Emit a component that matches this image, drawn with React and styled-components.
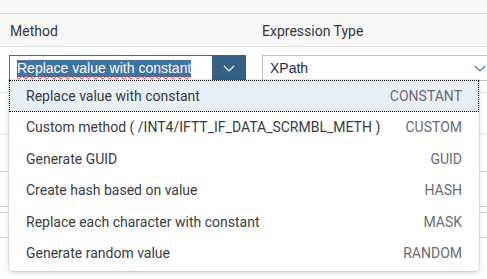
import React from "react";
import styled, { createGlobalStyle } from "styled-components";

const GlobalStyle = createGlobalStyle`
  html, body { margin: 0; padding: 0; background: #ffffff; }
  body { font-family: Roboto, "Liberation Sans", sans-serif; color: #32363a; overflow: hidden; }
`;

const Page = styled.div`
  position: relative;
  width: 487px;
  height: 279px;
  overflow: hidden;
`;

const TopStrip = styled.div`
  height: 13px;
  background: #f7f7f7;
  border-bottom: 1px solid #d9d9d9;
`;

const Grid = styled.div`
  display: grid;
  grid-template-columns: 253px 1fr;
`;

const HeaderRow = styled(Grid)`
  height: 32px;
  background: #f7f7f7;
  border-bottom: 1px solid #dedede;
`;

const HeaderCell = styled.div`
  display: flex;
  align-items: center;
  padding-left: ${(p) => p.$pad}px;
  font-size: 14px;
  color: #32363a;
  padding-top: 1px;
`;

const FormRow = styled(Grid)`
  padding: 8px 0 11px;
  border-bottom: 1px solid #e8e8e8;
`;

const Cell = styled.div`
  padding-left: 9px;
  padding-right: ${(p) => p.$right || 0}px;
  min-width: 0;
`;

const Input = styled.div`
  height: 26px;
  box-sizing: border-box;
  border: 1px solid ${(p) => (p.$focused ? "#3f6d97" : "#bfbfbf")};
  background: #fff;
  display: flex;
  align-items: stretch;
  width: ${(p) => p.$width}px;
  flex-shrink: 0;
  font-family: "Liberation Sans", Arial, sans-serif;
  font-size: 14px;
`;

const Value = styled.div`
  flex: 1;
  display: flex;
  align-items: center;
  padding-left: 7px;
  color: ${(p) => p.$color || "#32363a"};
  white-space: nowrap;
`;

const Selected = styled.span`
  background: #4072a2;
  color: #fff;
  line-height: 17px;
  text-decoration: underline wavy #e0262b;
  text-decoration-thickness: 1px;
  text-underline-offset: 2px;
`;

const ArrowButton = styled.div`
  width: 34px;
  background: ${(p) => (p.$solid ? "#346187" : "transparent")};
  display: flex;
  align-items: center;
  justify-content: center;
  margin: ${(p) => (p.$solid ? "-1px -1px -1px 0" : "0")};
`;

const TableRow = styled.div`
  height: ${(p) => p.$h}px;
  box-sizing: border-box;
  border-bottom: ${(p) => p.$b || "1px solid #cfcfcf"};
`;

const Popover = styled.div`
  position: absolute;
  left: 9px;
  top: 80px;
  width: 470px;
  box-sizing: border-box;
  background: #fff;
  border-radius: 0 0 4px 4px;
  box-shadow: 0 0 0 1px rgba(0, 0, 0, 0.08), 0 2px 5px rgba(0, 0, 0, 0.16);
  padding-bottom: 2px;
  font-family: Roboto, "Liberation Sans", sans-serif;
  font-size: 14px;
`;

const Item = styled.div`
  height: 31.5px;
  box-sizing: border-box;
  display: flex;
  align-items: center;
  justify-content: space-between;
  padding: 0 17px;
  background: ${(p) => (p.$active ? "#e8eff6" : "#fff")};
  outline: ${(p) => (p.$active ? "1px dotted #000" : "none")};
  outline-offset: -1px;
  white-space: nowrap;
`;

const ItemText = styled.span`
  color: #383c40;
`;

const ItemCode = styled.span`
  color: #6a6d70;
`;

const Chevron = ({ color }) => (
  <svg width="12" height="7" viewBox="0 0 12 7" fill="none">
    <path d="M1 1l5 5 5-5" stroke={color} strokeWidth="1.2" />
  </svg>
);

const items = [
  ["Replace value with constant", "CONSTANT"],
  ["Custom method ( /INT4/IFTT_IF_DATA_SCRMBL_METH )", "CUSTOM"],
  ["Generate GUID", "GUID"],
  ["Create hash based on value", "HASH"],
  ["Replace each character with constant", "MASK"],
  ["Generate random value", "RANDOM"],
];

export default function App() {
  return (
    <Page>
      <GlobalStyle />
      <TopStrip />
      <HeaderRow>
        <HeaderCell $pad={10}>Method</HeaderCell>
        <HeaderCell $pad={9}>Expression Type</HeaderCell>
      </HeaderRow>
      <FormRow>
        <Cell $right={7}>
          <Input $focused $width={237}>
            <Value>
              <Selected>Replace value with constant</Selected>
            </Value>
            <ArrowButton $solid>
              <Chevron color="#ffffff" />
            </ArrowButton>
          </Input>
        </Cell>
        <Cell>
          <Input $width={236}>
            <Value $color="#1d2d3e">XPath</Value>
            <ArrowButton>
              <Chevron color="#3f79b5" />
            </ArrowButton>
          </Input>
        </Cell>
      </FormRow>
      <TableRow $h={42} $b="2px solid #efefef" />
      <TableRow $h={37} />
      <TableRow $h={35} />
      <TableRow $h={6} />
      <TableRow $h={25} />
      <Popover>
        {items.map(([text, code], i) => (
          <Item key={code} $active={i === 0}>
            <ItemText>{text}</ItemText>
            <ItemCode>{code}</ItemCode>
          </Item>
        ))}
      </Popover>
    </Page>
  );
}
